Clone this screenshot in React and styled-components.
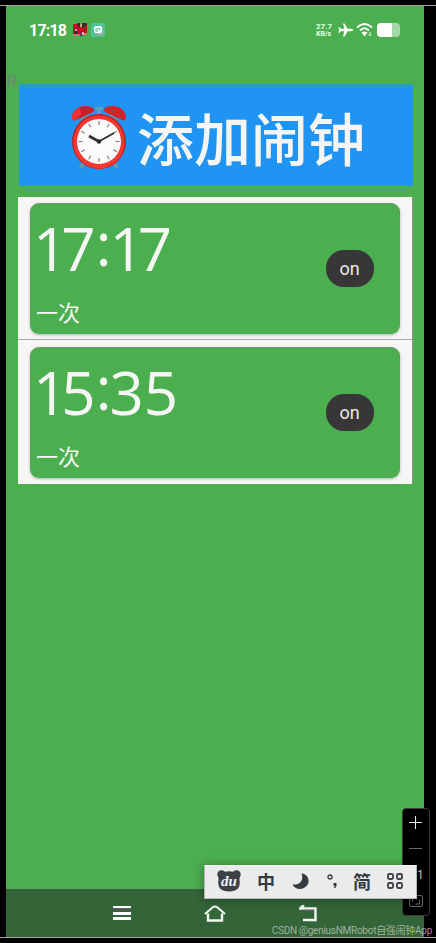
import React from "react";
import styled, { createGlobalStyle } from "styled-components";

const alarms = [
  { time: "17:17", repeat: "一次", state: "on" },
  { time: "15:35", repeat: "一次", state: "on" },
];

const App = () => {
  return (
    <Screen>
      <GlobalStyle />
      <Phone>
        <StatusBar>
          <StatusTime>17:18</StatusTime>
          <PhotoIcon />
          <ChatIcon />
          <StatusRight>
            <Speed>
              <span>27.7</span>
              <small>KB/s</small>
            </Speed>
            <PlaneIcon />
            <WifiIcon />
            <Battery />
          </StatusRight>
        </StatusBar>
        <PageLabel>R</PageLabel>
        <AddButton>
          <ClockIcon />
          <span>添加闹钟</span>
        </AddButton>
        <AlarmList>
          {alarms.map((alarm) => (
            <AlarmRow key={alarm.time}>
              <AlarmCard>
                <AlarmInfo>
                  <Time value={alarm.time} />
                  <Repeat>{alarm.repeat}</Repeat>
                </AlarmInfo>
                <Toggle>{alarm.state}</Toggle>
              </AlarmCard>
            </AlarmRow>
          ))}
        </AlarmList>
        <NavBar>
          <MenuIcon />
          <HomeIcon />
          <BackIcon />
        </NavBar>
      </Phone>
      <ZoomPanel>
        <svg width="28" height="108" viewBox="0 0 28 108" fill="none">
          <path d="M7 14.5h13M13.5 8v13" stroke="#e8e8e8" />
          <path d="M7 40.5h13" stroke="#6b6b6b" />
          <rect x="7.5" y="87.5" width="13" height="11" rx="1.5" stroke="#686868" />
          <path d="M10.500 94v-4h4M17.500 92v4h-4" stroke="#686868" />
        </svg>
        <ZoomRatio>1</ZoomRatio>
      </ZoomPanel>
      <ImeBar>
        <BearIcon />
        <ImeText $left={16}>中</ImeText>
        <MoonIcon />
        <PunctIcon />
        <ImeText $left={16}>简</ImeText>
        <GridIcon />
      </ImeBar>
      <Watermark>CSDN @geniusNMRobot自强闹钟App</Watermark>
    </Screen>
  );
};

// the "1" and the colon sit closer to the next digit than the others
const Time = ({ value }) => (
  <TimeText>
    {value.split("").map((char, i) => {
      if (char === ":") return <Colon key={i}>:</Colon>;
      if (char === "1") return <One key={i}>1</One>;
      return char;
    })}
  </TimeText>
);

const PhotoIcon = () => (
  <StatusSvg $left={6} width="14" height="14" viewBox="0 0 14 14">
    <path d="M0 1h14v12H0z" fill="#a51b2a" />
    <path d="M0 1h4v3H0zM6 4h5v4H6z" fill="#e0061f" />
    <path d="M4 0h3v4H4zM9 0h5v3h-3v2H9zM1 8h4v3H1z" fill="#3d2a2c" />
    <path d="M7 1h2v3H7zM2 6h2v2H2z" fill="#d19a92" />
    <path d="M0 11h7v2H0zM10 10h4v3h-4z" fill="#d6725d" />
    <path d="M6 10h3v2H6z" fill="#5b4380" />
    <path d="M9 9h2v3H9z" fill="#e9a9b4" />
  </StatusSvg>
);

const ChatIcon = () => (
  <StatusSvg $left={4} width="14" height="14" viewBox="0 0 14 14">
    <rect width="14" height="14" rx="2" fill="#4dc396" />
    <path d="M5 3h5l2 2v7H6l-3-3V5z" fill="#9bb5a8" />
    <rect x="3" y="3" width="8" height="7" rx="2" fill="#f3fff9" />
    <path d="M5 5v3h2M6 5.500h2.500v2" stroke="#54b68d" fill="none" />
  </StatusSvg>
);

const PlaneIcon = () => (
  <StatusSvg $left={4} width="15" height="14" viewBox="0 0 15 14">
    <path
      d="M15 7c0-.8-.6-1.200-1.500-1.200H9.600L6.600.4H5l1.300 5.400H3L1.600 4.200H.3L1.200 7 .3 9.800h1.300L3 8.200h3.300L5 13.600h1.600l3-5.400h3.900C14.400 8.200 15 7.800 15 7z"
      fill="#f4fff4"
    />
  </StatusSvg>
);

const WifiIcon = () => (
  <StatusSvg $left={3} width="17" height="14" viewBox="0 0 17 14" fill="none">
    <path d="M1 4.500Q8.500-2.500 16 4.500" stroke="#f2fff2" strokeWidth="2" />
    <path d="M4 7.500Q8.500 3 13 7.500" stroke="#f2fff2" strokeWidth="1.800" />
    <path d="M5.500 9.500Q8.500 7.500 11.500 9.500L8.500 13.500z" fill="#f2fff2" />
    <path d="M14 9v4M12.500 11.500l1.500 1.500 1.500-1.500" stroke="#d4f3d4" />
  </StatusSvg>
);

const ClockIcon = () => (
  <svg width="56" height="65" viewBox="0 0 56 65">
    <path d="M14 55l-4 8M42 55l4 8" stroke="#6d98a8" strokeWidth="4" />
    <path d="M28 3v9M24 3.500h8" stroke="#5b9fbd" strokeWidth="3" />
    <path d="M10 15l8-5M46 15l-8-5" stroke="#6b92a8" strokeWidth="3" />
    <path d="M1 13C1 3 12-1 20 2c3 1 4 3 2 5L5 15c-2 1-4 0-4-2z" fill="#cb2029" />
    <path d="M1 13c0-6 4-9 8-10l1 6-5 6c-2 1-4 0-4-2z" fill="#ee3135" />
    <path d="M55 13C55 3 44-1 36 2c-3 1-4 3-2 5l17 8c2 1 4 0 4-2z" fill="#d3242a" />
    <ellipse cx="28" cy="36.500" rx="27" ry="27.500" fill="#b92428" />
    <ellipse cx="28" cy="37" rx="25.500" ry="26.500" fill="#f4372f" />
    <ellipse cx="28" cy="36.500" rx="22" ry="22.500" fill="#fbfbfb" />
    {[...Array(12)].map((_, i) => (
      <path
        key={i}
        d="M28 16v4"
        stroke="#8e7c76"
        strokeWidth="1.200"
        transform={`rotate(${i * 30} 28 36.500)`}
      />
    ))}
    <path d="M28 36.500l-10-5.500" stroke="#302b2b" strokeWidth="2.600" />
    <path d="M27 37l16-9" stroke="#302b2b" strokeWidth="1.800" />
    <circle cx="28" cy="36.500" r="2.200" fill="#302b2b" />
  </svg>
);

const MenuIcon = () => (
  <svg width="18" height="15" viewBox="0 0 18 15">
    <path d="M0 0h18v2H0zM0 6h18v3H0zM0 11h18v3H0z" fill="#fff" />
    <path d="M0 2h18v1.500H0z" fill="#665569" />
  </svg>
);

const HomeIcon = () => (
  <svg width="22" height="17" viewBox="0 0 22 17" fill="none">
    <path d="M1 9l7.500-6.500Q11 .5 13.500 2.500L21 9" stroke="#f4f8f4" strokeWidth="2" />
    <path d="M4 8.500v7h14v-7" stroke="#f4f8f4" strokeWidth="2.400" />
  </svg>
);

const BackIcon = () => (
  <svg width="18" height="17" viewBox="0 0 18 17" fill="none">
    <path d="M5 0L1 3.500h15.500v11.500H4" stroke="#f4f8f4" strokeWidth="2.400" />
    <path d="M4 5.200h11" stroke="#626763" strokeWidth="1.200" />
  </svg>
);

const BearIcon = () => (
  <svg width="24" height="22" viewBox="0 0 24 22">
    <circle cx="4.500" cy="4.500" r="4.200" fill="#3d4145" />
    <circle cx="19.500" cy="4.500" r="4.200" fill="#3d4145" />
    <path
      d="M3 3Q12-.5 21 3q2 3 1.500 6.500 1 6-1.500 9-3 3-9 3t-9-3q-2.500-3-1.500-9Q1 6 3 3z"
      fill="#3d4145"
    />
    <BearText x="12" y="16" textAnchor="middle">
      du
    </BearText>
  </svg>
);

const MoonIcon = () => (
  <ImeSvg $left={17} width="18" height="17" viewBox="0 0 18 17">
    <path d="M9.500.5C16 1 18.500 8 15 12.500 11 17.500 3 17 .5 11.500 8 12.500 12 7 9.500.5z" fill="#353a40" />
  </ImeSvg>
);

const PunctIcon = () => (
  <ImeSvg $left={17} width="10" height="15" viewBox="0 0 10 15">
    <circle cx="3" cy="3" r="2" fill="none" stroke="#353a40" strokeWidth="1.400" />
    <path d="M6.500 9h3v2.500q0 2.200-2.500 3V13q1-.5 1-1.300H6.500z" fill="#353a40" />
  </ImeSvg>
);

const GridIcon = () => (
  <ImeSvg $left={16} width="16" height="16" viewBox="0 0 16 16" fill="none">
    {[1, 10].map((x) =>
      [1, 10].map((y) => (
        <rect
          key={`${x}-${y}`}
          x={x}
          y={y}
          width="5"
          height="5"
          rx="1.200"
          stroke="#42464b"
          strokeWidth="1.900"
        />
      ))
    )}
  </ImeSvg>
);

const GlobalStyle = createGlobalStyle`
  body {
    margin: 0;
    background: #000;
  }
  svg {
    display: block;
    flex-shrink: 0;
  }
`;

const Screen = styled.main`
  position: relative;
  box-sizing: border-box;
  width: 436px;
  height: 943px;
  padding-top: 5px;
  overflow: hidden;
  background: #000;
  font-family: Roboto, "Noto Sans CJK SC", sans-serif;
`;

const Phone = styled.div`
  display: flex;
  flex-direction: column;
  box-sizing: border-box;
  height: 933px;
  padding: 0 12px 0 6px;
  border-top: 1px solid #a5a5a5;
  border-bottom: 1px solid #a5a5a5;
  background: linear-gradient(#4bae4f, #4bae4f) 6px 0 / 418px 100% no-repeat;
`;

const StatusBar = styled.header`
  display: flex;
  align-items: center;
  height: 48px;
  padding: 0 24px 0 23px;
`;

const StatusTime = styled.span`
  width: 38px;
  color: #fff;
  font-size: 16px;
  font-weight: 700;
  letter-spacing: -0.8px;
`;

const StatusSvg = styled.svg`
  margin-left: ${(props) => props.$left}px;
`;

const StatusRight = styled.div`
  display: flex;
  align-items: center;
  margin-left: auto;
`;

const Speed = styled.div`
  display: flex;
  flex-direction: column;
  gap: 1px;
  width: 18px;
  color: #e4ffe4;
  font-size: 8px;
  font-weight: 700;
  line-height: 7px;

  small {
    font-size: 7px;
    line-height: 6px;
  }
`;

const Battery = styled.div`
  width: 23px;
  height: 14px;
  margin-left: 4px;
  border-radius: 4px;
  background: linear-gradient(90deg, #fff 15px, #a5d7a7 15px);
`;

const PageLabel = styled.div`
  height: 30px;
  padding: 18px 0 0 1px;
  box-sizing: border-box;
  color: #708671;
  font-size: 16px;
  line-height: 20px;
`;

const AddButton = styled.button`
  display: flex;
  align-items: center;
  box-sizing: border-box;
  width: 394px;
  height: 102px;
  margin-left: 13px;
  padding: 3px 0 0 51px;
  border: 1px solid #2999e4;
  border-top: 3px solid #2999c9;
  background: #2094f3;
  color: #f5f5f5;
  font-family: "Noto Sans CJK SC", sans-serif;
  font-size: 57px;
  font-weight: 500;
  line-height: 80px;

  span {
    margin: -4px 0 0 10px;
    white-space: nowrap;
  }
`;

const AlarmList = styled.section`
  width: 394px;
  margin: 11px 0 0 12px;
  border-right: 1px solid #889488;
  background: #f8f6f4;
`;

const AlarmRow = styled.div`
  box-sizing: border-box;
  height: 144px;
  padding: 7px 12px 0;

  &:first-child {
    height: 143px;
    padding-top: 6px;
    border-bottom: 1px solid #a9a8a8;
  }
`;

const AlarmCard = styled.article`
  display: flex;
  box-sizing: border-box;
  width: 370px;
  height: 131px;
  border-top: 1px solid #719872;
  border-radius: 9px;
  background: #4bae4f;
  box-shadow: 0 1px 3px rgba(0, 0, 0, 0.28);
`;

const AlarmInfo = styled.div`
  flex: 1;
  padding: 10px 0 0 6px;
  color: #f6f7f4;
`;

const TimeText = styled.div`
  margin-left: -3px;
  font-family: "Open Sans", Roboto, sans-serif;
  font-size: 60px;
  line-height: 69px;
  white-space: nowrap;
`;

const One = styled.span`
  letter-spacing: -6px;
`;

const Colon = styled.span`
  position: relative;
  top: -5px;
  letter-spacing: -2px;
`;

const Repeat = styled.div`
  margin-top: 14px;
  font-family: "Noto Sans CJK SC", sans-serif;
  font-size: 22px;
  line-height: 28px;
`;

const Toggle = styled.button`
  width: 48px;
  height: 37px;
  margin: 46px 26px 0 0;
  padding: 0 1px 0 0;
  border: 0;
  border-radius: 18px;
  background: #373737;
  color: #e8e8e8;
  font-family: Roboto, sans-serif;
  font-size: 18px;
  line-height: 37px;
`;

const NavBar = styled.nav`
  display: flex;
  align-items: center;
  justify-content: space-between;
  box-sizing: border-box;
  width: 418px;
  height: 48px;
  margin-top: auto;
  padding: 0 107px;
  background: #336538;
`;

const ZoomPanel = styled.aside`
  position: absolute;
  top: 808px;
  left: 402px;
  box-sizing: border-box;
  width: 28px;
  height: 108px;
  border: 1px solid #3b3b3b;
  border-radius: 4px;
  background: #000;

  svg {
    margin: -1px;
  }
`;

const ZoomRatio = styled.span`
  position: absolute;
  top: 59px;
  left: 14px;
  color: #d0d0d0;
  font-size: 12px;
  line-height: 14px;
`;

const ImeBar = styled.div`
  position: absolute;
  top: 865px;
  left: 204px;
  display: flex;
  align-items: center;
  box-sizing: border-box;
  width: 213px;
  height: 34px;
  padding: 0 13px 2px 12px;
  border: 1px solid #b5b5b5;
  border-top-color: #f4f4f4;
  background: #ebebeb;
  box-shadow: 0 1px 9px rgba(0, 0, 0, 0.38);
`;

const ImeText = styled.span`
  width: 18px;
  margin-left: ${(props) => props.$left}px;
  color: #353a40;
  font-family: "Noto Sans CJK SC", sans-serif;
  font-size: 18px;
  font-weight: 700;
  line-height: 20px;
`;

const ImeSvg = styled.svg`
  margin-left: ${(props) => props.$left}px;
`;

const BearText = styled.text`
  fill: #f2f2f2;
  font-family: "Liberation Serif", serif;
  font-size: 15px;
  font-style: italic;
  font-weight: 700;
`;

const Watermark = styled.div`
  position: absolute;
  right: 4px;
  bottom: 5px;
  color: rgba(205, 210, 205, 0.72);
  font-size: 10px;
  letter-spacing: -0.27px;
  line-height: 14px;
  white-space: nowrap;
`;

export default App;
